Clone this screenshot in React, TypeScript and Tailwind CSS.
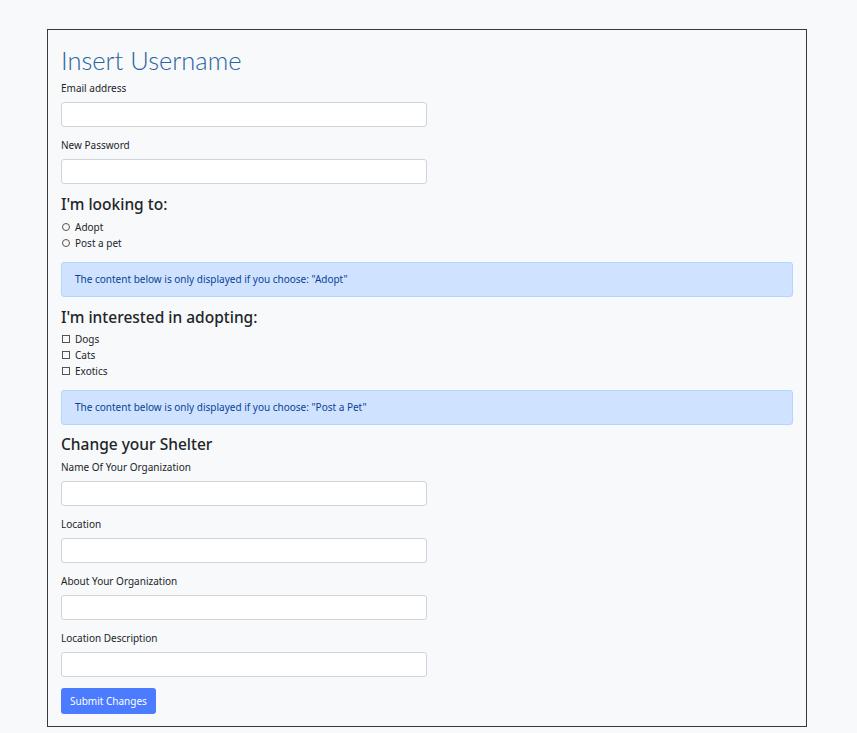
import React from 'react';

const font = { fontFamily: '"Noto Sans", "Open Sans", sans-serif' };
const titleFont = { fontFamily: 'Lato, "Noto Sans", sans-serif' };

function Field({ label }: { label: string }) {
  return (
    <div className="mb-[10px]">
      <label className="block h-[16px] text-[10px] leading-[16px] text-[#212529]">{label}</label>
      <input
        type="text"
        className="mt-[6px] block h-[25px] w-[366px] rounded-[3px] border border-[#ced4da] bg-white"
      />
    </div>
  );
}

function Radio({ label }: { label: string }) {
  return (
    <div className="flex h-[16px] items-center text-[10px] leading-[16px] text-[#212529]">
      <span className="ml-[1px] mr-[5px] inline-block h-[8px] w-[8px] rounded-full border border-[#555]" />
      {label}
    </div>
  );
}

function Check({ label }: { label: string }) {
  return (
    <div className="flex h-[16px] items-center text-[10px] leading-[16px] text-[#212529]">
      <span className="ml-[1px] mr-[5px] inline-block h-[8px] w-[8px] border border-[#555]" />
      {label}
    </div>
  );
}

function Notice({ text }: { text: string }) {
  return (
    <div className="flex h-[35px] items-center rounded-[3px] border border-[#b6d4fe] bg-[#cfe2ff] px-[13px] text-[10px] text-[#084298]">
      {text}
    </div>
  );
}

export default function App() {
  return (
    <div className="min-h-screen bg-[#f8f9fa] pt-[29px]" style={font}>
      <div className="ml-[47px] w-[760px] border border-[#343a40] px-[13px] pb-[12px] pt-[13px]">
        <h1 className="text-[25.5px] font-light leading-[34px] text-[#2a64a0]" style={titleFont}>
          Insert Username
        </h1>
        <div className="mt-[3px]">
          <Field label="Email address" />
          <Field label="New Password" />
        </div>

        <h5 className="text-[15.5px] font-medium leading-[20px] text-[#212529]">I'm looking to:</h5>
        <div className="mt-[5px]">
          <Radio label="Adopt" />
          <Radio label="Post a pet" />
        </div>

        <div className="mt-[11px]">
          <Notice text={'The content below is only displayed if you choose: "Adopt"'} />
        </div>

        <h5 className="mt-[10px] text-[15.5px] font-medium leading-[20px] text-[#212529]">I'm interested in adopting:</h5>
        <div className="mt-[4px]">
          <Check label="Dogs" />
          <Check label="Cats" />
          <Check label="Exotics" />
        </div>

        <div className="mt-[11px]">
          <Notice text={'The content below is only displayed if you choose: "Post a Pet"'} />
        </div>

        <h5 className="mt-[9px] text-[15.5px] font-medium leading-[20px] text-[#212529]">Change your Shelter</h5>
        <div className="mt-[5px]">
          <Field label="Name Of Your Organization" />
          <Field label="Location" />
          <Field label="About Your Organization" />
          <Field label="Location Description" />
        </div>

        <button className="mt-[11px] block h-[26px] rounded-[3px] bg-[#4b7bff] px-[9px] text-[10px] text-white">
          Submit Changes
        </button>
      </div>
    </div>
  );
}
